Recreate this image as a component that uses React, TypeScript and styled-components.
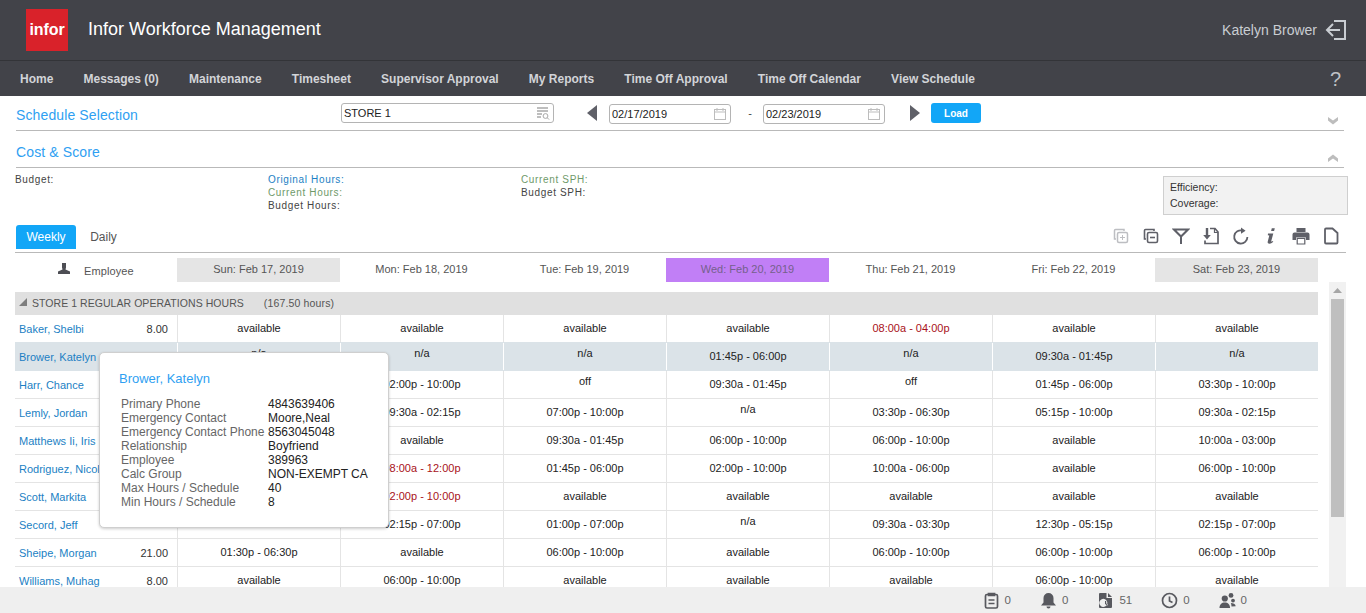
import React from "react";
import styled, { createGlobalStyle } from "styled-components";

const GlobalStyle = createGlobalStyle`
  html, body { margin: 0; padding: 0; height: 100%; background: #fff; }
  #root { height: 100%; }
  * { box-sizing: border-box; }
`;

const Page = styled.div`
  display: flex;
  flex-direction: column;
  height: 100vh;
  overflow: hidden;
  font-family: "Liberation Sans", Arial, sans-serif;
  color: #222;
`;

const TopBar = styled.header`
  display: flex;
  align-items: center;
  height: 61px;
  flex: none;
  padding: 0 19px 0 26px;
  background: #424349;
  border-bottom: 1px solid #333438;
`;

const Logo = styled.div`
  width: 42px;
  height: 42px;
  background: #d9222a;
  color: #fff;
  font-size: 16px;
  font-weight: 700;
  line-height: 42px;
  text-align: center;
  letter-spacing: -0.1px;
`;

const AppTitle = styled.div`
  margin: 0 0 2px 20px;
  color: #fff;
  font-size: 18px;
`;

const UserBox = styled.div`
  display: flex;
  align-items: center;
  gap: 8px;
  margin-left: auto;
  color: #c9cdd2;
  font-size: 14px;
`;

const NavBar = styled.nav`
  display: flex;
  align-items: center;
  gap: 30.15px;
  height: 35px;
  flex: none;
  padding: 0 25px 0 20px;
  background: #424349;
`;

const NavItem = styled.a`
  color: #d2d4d8;
  font-size: 12px;
  font-weight: 700;
  white-space: nowrap;
`;

const HelpMark = styled.span`
  margin-left: auto;
  color: #bfc1c5;
  font-size: 20px;
  line-height: 20px;
`;

const Section = styled.section<{ $height: number }>`
  display: flex;
  align-items: flex-start;
  height: ${(p) => p.$height}px;
  flex: none;
  margin: 0 22px 0 16px;
  border-bottom: 1px solid #b9b9b9;
`;

const SectionTitle = styled.h2<{ $top: number; $width?: number }>`
  width: ${(p) => (p.$width ? `${p.$width}px` : "auto")};
  margin: ${(p) => p.$top}px 0 0;
  color: #2f9ff2;
  font-size: 14px;
  font-weight: 400;
  letter-spacing: 0.12px;
  white-space: nowrap;
`;

const Controls = styled.div`
  display: flex;
  align-items: center;
  height: 20px;
  margin-top: 7px;
`;

const Field = styled.div<{ $width: number; $shift?: number; $ml?: number }>`
  display: flex;
  align-items: center;
  justify-content: space-between;
  width: ${(p) => p.$width}px;
  height: 20px;
  margin-top: ${(p) => p.$shift ?? 0}px;
  margin-left: ${(p) => p.$ml ?? 0}px;
  padding: 0 3px 0 2px;
  background: #fff;
  border: 1px solid #b4b4b4;
  border-radius: 3px;
  color: #222;
  font-size: 11px;
`;

const Arrow = styled.svg<{ $ml: number }>`
  display: block;
  flex: none;
  margin-left: ${(p) => p.$ml}px;
`;

const Dash = styled.span`
  width: 32px;
  padding-left: 6px;
  text-align: center;
  font-size: 11px;
  color: #444;
`;

const LoadButton = styled.button`
  width: 50px;
  height: 20px;
  margin-left: 11px;
  padding: 0;
  background: #12a6f7;
  border: 0;
  border-radius: 3px;
  color: #fff;
  font-family: inherit;
  font-size: 10px;
  font-weight: 700;
`;

const Chevron = styled.svg<{ $top: number }>`
  display: block;
  flex: none;
  margin: ${(p) => p.$top}px 5px 0 auto;
`;

const Metrics = styled.div`
  display: grid;
  grid-template-columns: 253px 253px 1fr 185px;
  height: 57px;
  flex: none;
  margin: 0 18px 0 15px;
  padding-top: 5px;
  font-size: 10px;
  letter-spacing: 0.65px;
  line-height: 13px;
  color: #444;
`;

const MetricLine = styled.div<{ $tone?: "blue" | "green" }>`
  color: ${(p) => (p.$tone === "blue" ? "#1b7fc4" : p.$tone === "green" ? "#6f9a6a" : "#444")};
`;

const ScoreBox = styled.div`
  width: 185px;
  height: 39px;
  margin-top: 3px;
  padding: 2px 6px;
  background: #f2f2f2;
  border: 1px solid #cfcfcf;
  color: #333;
  font-size: 10.5px;
  letter-spacing: 0;
  line-height: 16px;
`;

const TabBar = styled.div`
  display: flex;
  align-items: flex-start;
  height: 28px;
  flex: none;
  margin: 0 20px 0 15px;
  border-bottom: 1px solid #b9b9b9;
`;

const Tab = styled.div<{ $active?: boolean }>`
  width: ${(p) => (p.$active ? 60 : 55)}px;
  height: 24px;
  margin-left: ${(p) => (p.$active ? 1 : 0)}px;
  background: ${(p) => (p.$active ? "#12a6f7" : "transparent")};
  border-radius: 3px 3px 0 0;
  color: ${(p) => (p.$active ? "#fff" : "#555")};
  font-size: 12px;
  line-height: 24px;
  text-align: center;
`;

const Toolbar = styled.div`
  display: flex;
  align-items: center;
  gap: 12px;
  margin-left: auto;
  margin-right: 6px;
  height: 22px;
`;

const ToolIcon = styled.svg<{ $dim?: boolean }>`
  display: block;
  width: 18px;
  height: 18px;
  color: ${(p) => (p.$dim ? "#bdbec2" : "#5f6068")};
`;

const DayRow = styled.div`
  display: grid;
  grid-template-columns: 162px repeat(7, 163px);
  width: 1303px;
  height: 24px;
  flex: none;
  margin: 5px 0 0 15px;
`;

const EmployeeHead = styled.div`
  display: flex;
  align-items: flex-start;
  padding: 5px 0 0 43px;
  color: #555;
  font-size: 11px;
  letter-spacing: 0.1px;
`;

const EmployeeLabel = styled.span`
  margin: 2px 0 0 14px;
`;

const DayCell = styled.div<{ $tone?: "weekend" | "today" }>`
  background: ${(p) => (p.$tone === "weekend" ? "#e5e5e5" : p.$tone === "today" ? "#c17ff6" : "transparent")};
  color: ${(p) => (p.$tone === "today" ? "#75608c" : "#555")};
  font-size: 11px;
  line-height: 23px;
  text-align: center;
`;

const ScrollArea = styled.div`
  display: flex;
  flex: 1;
  min-height: 0;
  padding-left: 15px;
`;

const Table = styled.div`
  position: relative;
  width: 1303px;
  height: 100%;
  flex: none;
  padding-top: 10px;
  overflow: hidden;
`;

const GroupHead = styled.div`
  display: flex;
  align-items: center;
  height: 23px;
  padding: 0 0 2px 4px;
  background: #e0e0e0;
  color: #555;
  font-size: 10.5px;
  letter-spacing: 0.05px;
`;

const GroupHours = styled.span`
  margin-left: 20px;
  letter-spacing: 0.15px;
`;

const Row = styled.div<{ $selected?: boolean }>`
  display: grid;
  grid-template-columns: repeat(7, 163px) 162px;
  height: 28px;
  background: ${(p) => (p.$selected ? "#dbe3e8" : "#fff")};
  border-bottom: 1px solid ${(p) => (p.$selected ? "#dbe3e8" : "#e4e4e4")};
  box-shadow: ${(p) => (p.$selected ? "0 -1px 0 #dbe3e8" : "none")};
`;

const NameCell = styled.div<{ $selected?: boolean }>`
  display: flex;
  justify-content: space-between;
  align-items: center;
  padding: 0 9px 0 4px;
  border-right: 1px solid ${(p) => (p.$selected ? "#fff" : "#e4e4e4")};
  font-size: 11px;
`;

const NameLink = styled.a`
  color: #1b7fc4;
  white-space: nowrap;
`;

const Hours = styled.span`
  color: #333;
`;

const ShiftCell = styled.div<{ $selected?: boolean; $raised?: boolean; $late?: boolean }>`
  padding-bottom: ${(p) => (p.$raised ? 6 : 1)}px;
  border-right: 1px solid ${(p) => (p.$selected ? "#fff" : "#e4e4e4")};
  color: ${(p) => (p.$late ? "#a8121a" : "#222")};
  font-size: 11px;
  line-height: ${(p) => (p.$raised ? 21 : 26)}px;
  text-align: center;
  white-space: nowrap;

  &:last-child {
    border-right: 0;
  }
`;

const Tooltip = styled.div`
  position: absolute;
  left: 84px;
  top: 70px;
  width: 290px;
  height: 176px;
  padding: 18px 19px;
  background: #fff;
  border: 1px solid #cfcfcf;
  border-radius: 5px;
  box-shadow: 0 1px 3px rgba(0, 0, 0, 0.2);
`;

const TipName = styled.div`
  color: #2f9ff2;
  font-size: 13px;
  line-height: 15px;
`;

const TipGrid = styled.div`
  display: grid;
  grid-template-columns: 147px 1fr;
  margin: 11px 0 0 2px;
  font-size: 12px;
  line-height: 14px;
`;

const TipLabel = styled.div`
  color: #666;
  white-space: nowrap;
`;

const TipValue = styled.div`
  color: #222;
`;

const ScrollTrack = styled.div`
  position: relative;
  display: flex;
  flex-direction: column;
  align-items: center;
  width: 17px;
  margin-left: 11px;
  background: #f1f1f1;
`;

const ScrollThumb = styled.div`
  width: 13px;
  height: 218px;
  margin-top: 5px;
  background: #bfbfbf;
`;

const ScrollUp = styled.svg`
  display: block;
  margin-top: 6px;
`;

const Footer = styled.footer`
  display: flex;
  align-items: center;
  justify-content: flex-end;
  gap: 29px;
  height: 26px;
  flex: none;
  padding-right: 119px;
  background: #efefef;
`;

const FootItem = styled.div`
  display: flex;
  align-items: center;
  gap: 5px;
  color: #666;
  font-size: 11.5px;
`;

const FootIcon = styled.svg`
  display: block;
  width: 17px;
  height: 17px;
  color: #58595f;
`;

const Calendar = () => (
  <svg width="14" height="14" viewBox="0 0 14 14" fill="none" stroke="#bdbdbd">
    <rect x="1.5" y="2.5" width="11" height="10" />
    <path d="M1.5 5h11M4 1v3M10 1v3" />
  </svg>
);

const Lookup = () => (
  <svg width="14" height="14" viewBox="0 0 14 14" fill="none" stroke="#a9a9a9">
    <path d="M1 2h11M1 5h11M1 8h5M1 11h4" strokeWidth="1.4" />
    <circle cx="9.5" cy="10" r="2.4" fill="#fff" />
    <path d="M11.3 11.8l1.8 1.8" />
  </svg>
);

const row = (
  name: string,
  hours: string,
  shifts: string[],
  opts: { selected?: boolean; late?: number } = {}
) => ({ name, hours, shifts, ...opts });

const A = "available";

const rows = [
  row("Baker, Shelbi", "8.00", [A, A, A, A, "08:00a - 04:00p", A, A], { late: 4 }),
  row("Brower, Katelyn", "", ["n/a", "n/a", "n/a", "01:45p - 06:00p", "n/a", "09:30a - 01:45p", "n/a"], { selected: true }),
  row("Harr, Chance", "", ["", "02:00p - 10:00p", "off", "09:30a - 01:45p", "off", "01:45p - 06:00p", "03:30p - 10:00p"]),
  row("Lemly, Jordan", "", ["", "09:30a - 02:15p", "07:00p - 10:00p", "n/a", "03:30p - 06:30p", "05:15p - 10:00p", "09:30a - 02:15p"]),
  row("Matthews Ii, Iris", "", ["", A, "09:30a - 01:45p", "06:00p - 10:00p", "06:00p - 10:00p", A, "10:00a - 03:00p"]),
  row("Rodriguez, Nicole", "", ["", "08:00a - 12:00p", "01:45p - 06:00p", "02:00p - 10:00p", "10:00a - 06:00p", A, "06:00p - 10:00p"], { late: 1 }),
  row("Scott, Markita", "", ["", "02:00p - 10:00p", A, A, A, A, A], { late: 1 }),
  row("Secord, Jeff", "", ["", "02:15p - 07:00p", "01:00p - 07:00p", "n/a", "09:30a - 03:30p", "12:30p - 05:15p", "02:15p - 07:00p"]),
  row("Sheipe, Morgan", "21.00", ["01:30p - 06:30p", A, "06:00p - 10:00p", A, "06:00p - 10:00p", "06:00p - 10:00p", "06:00p - 10:00p"]),
  row("Williams, Muhag", "8.00", [A, "06:00p - 10:00p", A, A, A, "06:00p - 10:00p", A]),
];

const days: { label: string; tone?: "weekend" | "today" }[] = [
  { label: "Sun: Feb 17, 2019", tone: "weekend" },
  { label: "Mon: Feb 18, 2019" },
  { label: "Tue: Feb 19, 2019" },
  { label: "Wed: Feb 20, 2019", tone: "today" },
  { label: "Thu: Feb 21, 2019" },
  { label: "Fri: Feb 22, 2019" },
  { label: "Sat: Feb 23, 2019", tone: "weekend" },
];

const tipRows = [
  ["Primary Phone", "4843639406"],
  ["Emergency Contact", "Moore,Neal"],
  ["Emergency Contact Phone", "8563045048"],
  ["Relationship", "Boyfriend"],
  ["Employee", "389963"],
  ["Calc Group", "NON-EXEMPT CA"],
  ["Max Hours / Schedule", "40"],
  ["Min Hours / Schedule", "8"],
];

const navItems = [
  "Home",
  "Messages (0)",
  "Maintenance",
  "Timesheet",
  "Supervisor Approval",
  "My Reports",
  "Time Off Approval",
  "Time Off Calendar",
  "View Schedule",
];

const App = () => {
  return (
    <Page>
      <GlobalStyle />
      <TopBar>
        <Logo>infor</Logo>
        <AppTitle>Infor Workforce Management</AppTitle>
        <UserBox>
          Katelyn Brower
          <svg width="22" height="22" viewBox="0 0 22 22" fill="none" stroke="#c9cdd2" strokeWidth="2">
            <path d="M9 2h11v18H9" />
            <path d="M15 11H2M8 5l-6 6 6 6" />
          </svg>
        </UserBox>
      </TopBar>
      <NavBar>
        {navItems.map((item) => (
          <NavItem key={item}>{item}</NavItem>
        ))}
        <HelpMark>?</HelpMark>
      </NavBar>

      <Section $height={35}>
        <SectionTitle $top={11} $width={325}>Schedule Selection</SectionTitle>
        <Controls>
          <Field $width={213}>
            STORE 1
            <Lookup />
          </Field>
          <Arrow $ml={33} width="10" height="16" viewBox="0 0 10 16">
            <path d="M10 0v16L0 8z" fill="#5f6068" />
          </Arrow>
          <Field $width={122} $shift={1} $ml={12}>
            02/17/2019
            <Calendar />
          </Field>
          <Dash>-</Dash>
          <Field $width={122} $shift={1}>
            02/23/2019
            <Calendar />
          </Field>
          <Arrow $ml={25} width="10" height="16" viewBox="0 0 10 16">
            <path d="M0 0v16L10 8z" fill="#5f6068" />
          </Arrow>
          <LoadButton>Load</LoadButton>
        </Controls>
        <Chevron $top={20} width="12" height="9" viewBox="0 0 12 9">
          <path d="M1 1l5 3.5L11 1v3.5L6 8.5 1 4.5z" fill="#bdbdbd" />
        </Chevron>
      </Section>

      <Section $height={37}>
        <SectionTitle $top={13}>Cost &amp; Score</SectionTitle>
        <Chevron $top={23} width="12" height="9" viewBox="0 0 12 9">
          <path d="M1 8l5-3.5L11 8V4.5L6 .5 1 4.5z" fill="#bdbdbd" />
        </Chevron>
      </Section>

      <Metrics>
        <div>
          <MetricLine>Budget:</MetricLine>
        </div>
        <div>
          <MetricLine $tone="blue">Original Hours:</MetricLine>
          <MetricLine $tone="green">Current Hours:</MetricLine>
          <MetricLine>Budget Hours:</MetricLine>
        </div>
        <div>
          <MetricLine $tone="green">Current SPH:</MetricLine>
          <MetricLine>Budget SPH:</MetricLine>
        </div>
        <ScoreBox>
          Efficiency:
          <br />
          Coverage:
        </ScoreBox>
      </Metrics>

      <TabBar>
        <Tab $active>Weekly</Tab>
        <Tab>Daily</Tab>
        <Toolbar>
          <ToolIcon $dim viewBox="0 0 18 18" fill="none" stroke="currentColor" strokeWidth="1.5">
            <path d="M4 12H2.5V3.5a1 1 0 0 1 1-1H12V4" />
            <rect x="5.5" y="5.5" width="10" height="10" rx="1.5" />
            <path d="M10.5 8v5M8 10.5h5" strokeWidth="1" />
          </ToolIcon>
          <ToolIcon viewBox="0 0 18 18" fill="none" stroke="currentColor" strokeWidth="1.6">
            <path d="M4 12H2.5V3.5a1 1 0 0 1 1-1H12V4" />
            <rect x="5.5" y="5.5" width="10" height="10" rx="1.5" />
            <path d="M8 10.5h5" />
          </ToolIcon>
          <ToolIcon viewBox="0 0 18 18" fill="none" stroke="currentColor" strokeWidth="2">
            <path d="M2 2.5h14L9 9.5zM9 9v8" />
          </ToolIcon>
          <ToolIcon viewBox="0 0 18 18" fill="none" stroke="currentColor" strokeWidth="1.7">
            <path d="M8 1.5h5l3 3.5v11.5H3v-3" />
            <path d="M12.5 1.5V5.5H16" strokeWidth="1.2" />
            <path d="M5 1v8" strokeWidth="2.4" />
            <path d="M1.2 8h7.6L5 12.6z" fill="currentColor" stroke="none" />
          </ToolIcon>
          <ToolIcon viewBox="0 0 18 18" fill="none" stroke="currentColor" strokeWidth="1.8">
            <path d="M10.6 3.6A6.6 6.6 0 1 0 15.4 10" />
            <path d="M9 0.6l4.6 3.2L9 6.8z" fill="currentColor" stroke="none" />
          </ToolIcon>
          <ToolIcon viewBox="0 0 18 18" fill="currentColor">
            <path d="M9.8 1.2h3l-.7 2.8h-3zM6 6.4h5.3l-2.1 7.8c-.1.5.4.6 1.6-.3l.5.6c-1.4 1.6-2.6 2.3-4 2.3-1.2 0-1.9-.7-1.6-2l1.6-6.2-1.5-.3z" />
          </ToolIcon>
          <ToolIcon viewBox="0 0 18 18" fill="currentColor">
            <path d="M4.5 1h9v4h-9zM2.5 5.5h13a2 2 0 0 1 2 2V13h-3.5v-2.5H4V13H.5V7.5a2 2 0 0 1 2-2z" />
            <path d="M5.2 11.5h7.6V17H5.2z" fill="none" stroke="currentColor" strokeWidth="1.2" />
          </ToolIcon>
          <ToolIcon viewBox="0 0 18 18" fill="none" stroke="currentColor" strokeWidth="1.8">
            <path d="M3 2.5a1 1 0 0 1 1-1h6.5L15.5 6v9.5a1 1 0 0 1-1 1H4a1 1 0 0 1-1-1z" />
          </ToolIcon>
        </Toolbar>
      </TabBar>

      <DayRow>
        <EmployeeHead>
          <svg width="12" height="11" viewBox="0 0 12 11" fill="#4d4e54">
            <path d="M4 0h4v4.5L7.5 6.5 12 8.6V11H0V8.6l4.5-2.1L4 4.5z" />
          </svg>
          <EmployeeLabel>Employee</EmployeeLabel>
        </EmployeeHead>
        {days.map((day) => (
          <DayCell key={day.label} $tone={day.tone}>
            {day.label}
          </DayCell>
        ))}
      </DayRow>

      <ScrollArea>
        <Table>
          <GroupHead>
            <svg width="13" height="9" viewBox="0 0 13 9" fill="#7d7d7d">
              <path d="M8 0v8H0z" />
            </svg>
            STORE 1 REGULAR OPERATIONS HOURS
            <GroupHours>(167.50 hours)</GroupHours>
          </GroupHead>
          {rows.map((r) => (
            <Row key={r.name} $selected={r.selected}>
              <NameCell $selected={r.selected}>
                <NameLink>{r.name}</NameLink>
                <Hours>{r.hours}</Hours>
              </NameCell>
              {r.shifts.map((shift, i) => (
                <ShiftCell
                  key={i}
                  $selected={r.selected}
                  $raised={shift === "n/a" || shift === "off"}
                  $late={r.late === i}
                >
                  {shift}
                </ShiftCell>
              ))}
            </Row>
          ))}
          <Tooltip>
            <TipName>Brower, Katelyn</TipName>
            <TipGrid>
              {tipRows.map(([label, value]) => (
                <React.Fragment key={label}>
                  <TipLabel>{label}</TipLabel>
                  <TipValue>{value}</TipValue>
                </React.Fragment>
              ))}
            </TipGrid>
          </Tooltip>
        </Table>
        <ScrollTrack>
          <ScrollUp width="9" height="6" viewBox="0 0 9 6">
            <path d="M4.5 0L9 5H0z" fill="#a6a6a6" />
          </ScrollUp>
          <ScrollThumb />
        </ScrollTrack>
      </ScrollArea>

      <Footer>
        <FootItem>
          <FootIcon viewBox="0 0 17 17" fill="none" stroke="currentColor" strokeWidth="1.7">
            <rect x="2.5" y="2.5" width="12" height="13.5" rx="1.5" />
            <path d="M5.5 1.5h6v2h-6zM5.5 8h6M5.5 11.5h6" />
          </FootIcon>
          0
        </FootItem>
        <FootItem>
          <FootIcon viewBox="0 0 17 17" fill="currentColor">
            <path d="M8.5 1a5 5 0 0 1 5 5v4.5l2.5 3H1l2.5-3V6a5 5 0 0 1 5-5zM6.5 14.5h4a2 2 0 0 1-4 0z" />
          </FootIcon>
          0
        </FootItem>
        <FootItem>
          <FootIcon viewBox="0 0 17 17" fill="currentColor">
            <path fillRule="evenodd" d="M2 2a1 1 0 0 1 1-1h6.5v5H15v9a1 1 0 0 1-1 1H3a1 1 0 0 1-1-1zM8.5 7.5a4 4 0 1 0 0 6.8 4 4 0 0 0 0-6.8zM8 9h1.2v2.4L11 12.5l-.6 1L8 12z" />
            <path d="M11 1l4 4h-4z" />
          </FootIcon>
          51
        </FootItem>
        <FootItem>
          <FootIcon viewBox="0 0 17 17" fill="none" stroke="currentColor" strokeWidth="1.7">
            <circle cx="8.5" cy="8.5" r="7" />
            <path d="M8.5 4.5v4.5l3 1.5" />
          </FootIcon>
          0
        </FootItem>
        <FootItem>
          <FootIcon viewBox="0 0 17 17" fill="currentColor">
            <circle cx="5.8" cy="6.5" r="3.1" />
            <circle cx="12" cy="3.4" r="2.4" />
            <circle cx="14" cy="8.6" r="1.9" />
            <path d="M0.5 16c0-3.6 2.2-5.6 5.3-5.6s5.3 2 5.3 5.6zM11.8 11c2.4 0 4.7.7 4.9 3.2l-4.2.4c0-1.4-.2-2.6-.7-3.6z" />
          </FootIcon>
          0
        </FootItem>
      </Footer>
    </Page>
  );
};

export default App;
